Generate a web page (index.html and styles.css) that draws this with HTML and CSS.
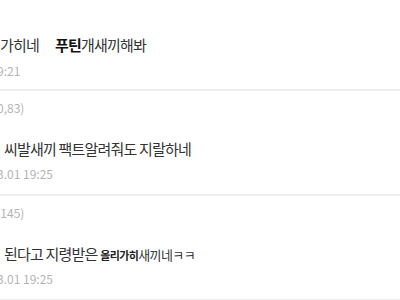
FILE: index.html
```html
<!DOCTYPE html>
<html>
<head>
  <meta charset="UTF-8" />
  <title>Comments</title>
  <link rel="stylesheet" href="styles.css">
</head>
<body>
  <div class="comment-list">
    <div class="comment first">
      <p class="comment-text">가히네<span class="gap"></span><b>푸틴</b>개새끼해봐</p>
      <div class="comment-time">9:21</div>
    </div>
    <div class="comment">
      <div class="comment-meta">0,83)</div>
      <p class="comment-text indent">씨발새끼 팩트알려줘도 지랄하네</p>
      <div class="comment-time">3.01 19:25</div>
    </div>
    <div class="comment">
      <div class="comment-meta">.145)</div>
      <p class="comment-text indent">된다고 지령받은 <span class="small">올리가히</span><span class="mid">새끼네ㅋㅋ</span></p>
      <div class="comment-time">3.01 19:25</div>
    </div>
  </div>
</body>
</html>
```

FILE: styles.css
```css
:root {
  --text-primary: #333333;
  --text-strong: #111111;
  --text-muted: #b4b4b4;
  --border-color: #eeeeee;
}

* {
  margin: 0;
  padding: 0;
  box-sizing: border-box;
}

body {
  font-family: "Noto Sans CJK KR", "Noto Sans", sans-serif;
  background-color: #ffffff;
  color: var(--text-primary);
  overflow: hidden;
}

.comment {
  padding: 8px 0 11px;
  border-bottom: 2px solid var(--border-color);
}

.comment.first {
  padding-top: 35px;
  padding-bottom: 9px;
}

.comment-meta {
  height: 18px;
  line-height: 18px;
  font-size: 12px;
  color: var(--text-muted);
  margin-bottom: 22px;
  margin-left: -3px;
}

.comment-text {
  height: 20px;
  line-height: 20px;
  font-size: 15px;
  letter-spacing: -0.8px;
  white-space: nowrap;
}

.comment-text.indent {
  padding-left: 4px;
}

.comment-text b {
  color: var(--text-strong);
  font-weight: 700;
}

.comment-text .gap {
  display: inline-block;
  width: 16px;
}

.comment-text .small {
  font-size: 11px;
  font-weight: 700;
  letter-spacing: -0.6px;
  color: #222222;
}

.comment-text .mid {
  font-size: 13px;
  letter-spacing: -0.6px;
}

.comment-time {
  height: 18px;
  line-height: 18px;
  margin-top: 6px;
  font-size: 12px;
  color: var(--text-muted);
  margin-left: -3px;
}

.first .comment-time {
  margin-top: 7px;
}
```
